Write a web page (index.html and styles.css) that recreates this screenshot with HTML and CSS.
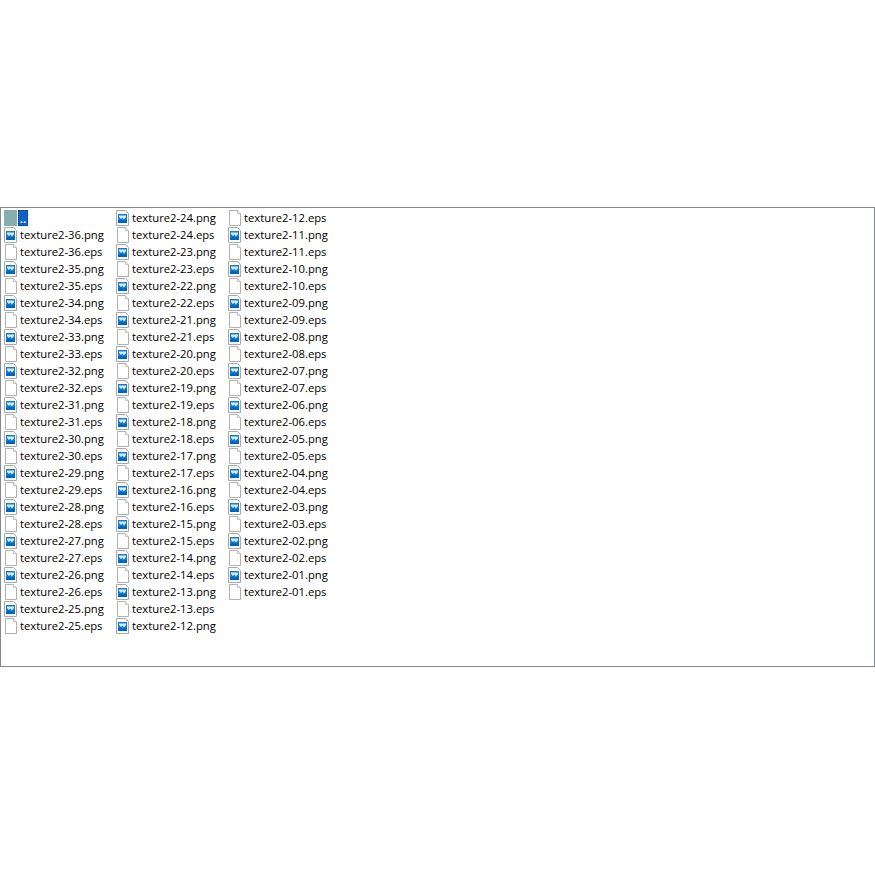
FILE: index.html
```html
<!DOCTYPE html>
<html lang="en">
<head>
<meta charset="utf-8">
<title>Files</title>
<link rel="stylesheet" href="styles.css">
</head>
<body>
<svg class="defs" width="0" height="0" aria-hidden="true">
<symbol id="eps" viewBox="0 0 16 16"><path d="M1.5.5H9.5L12.5 3.5V15.5H1.5Z" fill="#fff" stroke="#b0b0b0"/><path d="M9.5.5V3.5H12.5" fill="#f4f4f4" stroke="#c4c4c4"/></symbol>
<symbol id="png" viewBox="0 0 16 16"><path d="M.5.5H9.5L12.5 3.5V15.5H.5Z" fill="#fff" stroke="#a8a8a8"/><rect x="2" y="4" width="9" height="9" fill="#0c7fdc"/><path d="M3 5.5H10V7L8 9.5L6.5 7.5L5 9L3 7Z" fill="#d9eefc"/><path d="M2 13V11L5 9.5L7 11L11 9V13Z" fill="#0a62b4"/></symbol>
</svg>
<main class="list">
<div class="item"><span class="folder"></span><span class="up">..</span></div>
<div class="item"><svg class="icon"><use href="#png"/></svg><span>texture2-36.png</span></div>
<div class="item"><svg class="icon"><use href="#eps"/></svg><span>texture2-36.eps</span></div>
<div class="item"><svg class="icon"><use href="#png"/></svg><span>texture2-35.png</span></div>
<div class="item"><svg class="icon"><use href="#eps"/></svg><span>texture2-35.eps</span></div>
<div class="item"><svg class="icon"><use href="#png"/></svg><span>texture2-34.png</span></div>
<div class="item"><svg class="icon"><use href="#eps"/></svg><span>texture2-34.eps</span></div>
<div class="item"><svg class="icon"><use href="#png"/></svg><span>texture2-33.png</span></div>
<div class="item"><svg class="icon"><use href="#eps"/></svg><span>texture2-33.eps</span></div>
<div class="item"><svg class="icon"><use href="#png"/></svg><span>texture2-32.png</span></div>
<div class="item"><svg class="icon"><use href="#eps"/></svg><span>texture2-32.eps</span></div>
<div class="item"><svg class="icon"><use href="#png"/></svg><span>texture2-31.png</span></div>
<div class="item"><svg class="icon"><use href="#eps"/></svg><span>texture2-31.eps</span></div>
<div class="item"><svg class="icon"><use href="#png"/></svg><span>texture2-30.png</span></div>
<div class="item"><svg class="icon"><use href="#eps"/></svg><span>texture2-30.eps</span></div>
<div class="item"><svg class="icon"><use href="#png"/></svg><span>texture2-29.png</span></div>
<div class="item"><svg class="icon"><use href="#eps"/></svg><span>texture2-29.eps</span></div>
<div class="item"><svg class="icon"><use href="#png"/></svg><span>texture2-28.png</span></div>
<div class="item"><svg class="icon"><use href="#eps"/></svg><span>texture2-28.eps</span></div>
<div class="item"><svg class="icon"><use href="#png"/></svg><span>texture2-27.png</span></div>
<div class="item"><svg class="icon"><use href="#eps"/></svg><span>texture2-27.eps</span></div>
<div class="item"><svg class="icon"><use href="#png"/></svg><span>texture2-26.png</span></div>
<div class="item"><svg class="icon"><use href="#eps"/></svg><span>texture2-26.eps</span></div>
<div class="item"><svg class="icon"><use href="#png"/></svg><span>texture2-25.png</span></div>
<div class="item"><svg class="icon"><use href="#eps"/></svg><span>texture2-25.eps</span></div>
<div class="item"><svg class="icon"><use href="#png"/></svg><span>texture2-24.png</span></div>
<div class="item"><svg class="icon"><use href="#eps"/></svg><span>texture2-24.eps</span></div>
<div class="item"><svg class="icon"><use href="#png"/></svg><span>texture2-23.png</span></div>
<div class="item"><svg class="icon"><use href="#eps"/></svg><span>texture2-23.eps</span></div>
<div class="item"><svg class="icon"><use href="#png"/></svg><span>texture2-22.png</span></div>
<div class="item"><svg class="icon"><use href="#eps"/></svg><span>texture2-22.eps</span></div>
<div class="item"><svg class="icon"><use href="#png"/></svg><span>texture2-21.png</span></div>
<div class="item"><svg class="icon"><use href="#eps"/></svg><span>texture2-21.eps</span></div>
<div class="item"><svg class="icon"><use href="#png"/></svg><span>texture2-20.png</span></div>
<div class="item"><svg class="icon"><use href="#eps"/></svg><span>texture2-20.eps</span></div>
<div class="item"><svg class="icon"><use href="#png"/></svg><span>texture2-19.png</span></div>
<div class="item"><svg class="icon"><use href="#eps"/></svg><span>texture2-19.eps</span></div>
<div class="item"><svg class="icon"><use href="#png"/></svg><span>texture2-18.png</span></div>
<div class="item"><svg class="icon"><use href="#eps"/></svg><span>texture2-18.eps</span></div>
<div class="item"><svg class="icon"><use href="#png"/></svg><span>texture2-17.png</span></div>
<div class="item"><svg class="icon"><use href="#eps"/></svg><span>texture2-17.eps</span></div>
<div class="item"><svg class="icon"><use href="#png"/></svg><span>texture2-16.png</span></div>
<div class="item"><svg class="icon"><use href="#eps"/></svg><span>texture2-16.eps</span></div>
<div class="item"><svg class="icon"><use href="#png"/></svg><span>texture2-15.png</span></div>
<div class="item"><svg class="icon"><use href="#eps"/></svg><span>texture2-15.eps</span></div>
<div class="item"><svg class="icon"><use href="#png"/></svg><span>texture2-14.png</span></div>
<div class="item"><svg class="icon"><use href="#eps"/></svg><span>texture2-14.eps</span></div>
<div class="item"><svg class="icon"><use href="#png"/></svg><span>texture2-13.png</span></div>
<div class="item"><svg class="icon"><use href="#eps"/></svg><span>texture2-13.eps</span></div>
<div class="item"><svg class="icon"><use href="#png"/></svg><span>texture2-12.png</span></div>
<div class="item"><svg class="icon"><use href="#eps"/></svg><span>texture2-12.eps</span></div>
<div class="item"><svg class="icon"><use href="#png"/></svg><span>texture2-11.png</span></div>
<div class="item"><svg class="icon"><use href="#eps"/></svg><span>texture2-11.eps</span></div>
<div class="item"><svg class="icon"><use href="#png"/></svg><span>texture2-10.png</span></div>
<div class="item"><svg class="icon"><use href="#eps"/></svg><span>texture2-10.eps</span></div>
<div class="item"><svg class="icon"><use href="#png"/></svg><span>texture2-09.png</span></div>
<div class="item"><svg class="icon"><use href="#eps"/></svg><span>texture2-09.eps</span></div>
<div class="item"><svg class="icon"><use href="#png"/></svg><span>texture2-08.png</span></div>
<div class="item"><svg class="icon"><use href="#eps"/></svg><span>texture2-08.eps</span></div>
<div class="item"><svg class="icon"><use href="#png"/></svg><span>texture2-07.png</span></div>
<div class="item"><svg class="icon"><use href="#eps"/></svg><span>texture2-07.eps</span></div>
<div class="item"><svg class="icon"><use href="#png"/></svg><span>texture2-06.png</span></div>
<div class="item"><svg class="icon"><use href="#eps"/></svg><span>texture2-06.eps</span></div>
<div class="item"><svg class="icon"><use href="#png"/></svg><span>texture2-05.png</span></div>
<div class="item"><svg class="icon"><use href="#eps"/></svg><span>texture2-05.eps</span></div>
<div class="item"><svg class="icon"><use href="#png"/></svg><span>texture2-04.png</span></div>
<div class="item"><svg class="icon"><use href="#eps"/></svg><span>texture2-04.eps</span></div>
<div class="item"><svg class="icon"><use href="#png"/></svg><span>texture2-03.png</span></div>
<div class="item"><svg class="icon"><use href="#eps"/></svg><span>texture2-03.eps</span></div>
<div class="item"><svg class="icon"><use href="#png"/></svg><span>texture2-02.png</span></div>
<div class="item"><svg class="icon"><use href="#eps"/></svg><span>texture2-02.eps</span></div>
<div class="item"><svg class="icon"><use href="#png"/></svg><span>texture2-01.png</span></div>
<div class="item"><svg class="icon"><use href="#eps"/></svg><span>texture2-01.eps</span></div>
</main>
</body>
</html>
```
FILE: styles.css
```css
html, body {
  margin: 0;
  background: #fff;
}
body {
  padding-top: 207px;
  font-family: "Open Sans", "Noto Sans", sans-serif;
  font-size: 11.25px;
  color: #000;
}
.defs {
  position: absolute;
}
.list {
  box-sizing: border-box;
  width: 875px;
  height: 460px;
  border: 1px solid #828790;
  padding: 1px 0 0 3px;
  display: grid;
  grid-auto-flow: column;
  grid-template-rows: repeat(25, 17px);
  grid-auto-columns: 112px;
}
.item {
  display: flex;
  align-items: center;
  white-space: nowrap;
  line-height: 17px;
}
.icon {
  width: 16px;
  height: 16px;
  flex: none;
}
.folder {
  width: 13px;
  height: 16px;
  background: #86aeb0;
  flex: none;
}
.up {
  margin-left: 1px;
  width: 10px;
  height: 16px;
  background: #0a64c8;
  color: #fff;
  outline: 1px dotted #103a70;
  outline-offset: -1px;
  line-height: 17px;
  text-align: center;
  font-weight: 700;
}
```
